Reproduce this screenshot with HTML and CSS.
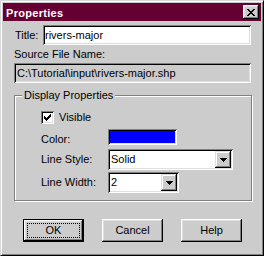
FILE: index.html
```html
<!DOCTYPE html>
<html>
<head>
<meta charset="utf-8">
<title>Properties</title>
<link rel="stylesheet" href="styles.css">
</head>
<body>
<div class="window">
  <div class="titlebar">
    <span class="title">Properties</span>
    <span class="close-btn"><svg class="px" width="8" height="7" viewBox="0 0 8 7"><path d="M0 0h2v1h-2zM6 0h2v1h-2zM1 1h2v1h-2zM5 1h2v1h-2zM2 2h4v1h-4zM3 3h2v1h-2zM2 4h4v1h-4zM1 5h2v1h-2zM5 5h2v1h-2zM0 6h2v1h-2zM6 6h2v1h-2z" fill="#000"/></svg></span>
  </div>
  <div class="content">
    <div class="title-row">
      <span class="lbl title-lbl">Title:</span>
      <div class="field input">rivers-major</div>
    </div>
    <div class="lbl src-lbl">Source File Name:</div>
    <div class="field path">C:\Tutorial\input\rivers-major.shp</div>
    <div class="group">
      <span class="legend">Display Properties</span>
      <div class="check-row">
        <span class="checkbox"><svg class="px" width="7" height="7" viewBox="0 0 7 7"><path d="M6 0h1v1h-1zM5 1h2v1h-2zM0 2h1v1h-1zM4 2h3v1h-3zM0 3h2v1h-2zM3 3h3v1h-3zM0 4h5v1h-5zM1 5h3v1h-3zM2 6h1v1h-1z" fill="#000"/></svg></span>
        <span class="lbl">Visible</span>
      </div>
      <div class="prop-row color-row">
        <span class="lbl prop-lbl color-lbl">Color:</span>
        <span class="swatch"></span>
      </div>
      <div class="prop-row style-row">
        <span class="lbl prop-lbl">Line Style:</span>
        <div class="combo combo-style">
          <span class="combo-text">Solid</span>
          <span class="drop"><svg class="px" width="7" height="4" viewBox="0 0 7 4"><path d="M0 0h7v1h-7zM1 1h5v1h-5zM2 2h3v1h-3zM3 3h1v1h-1z" fill="#000"/></svg></span>
        </div>
      </div>
      <div class="prop-row width-row">
        <span class="lbl prop-lbl">Line Width:</span>
        <div class="combo combo-width">
          <span class="combo-text">2</span>
          <span class="drop"><svg class="px" width="7" height="4" viewBox="0 0 7 4"><path d="M0 0h7v1h-7zM1 1h5v1h-5zM2 2h3v1h-3zM3 3h1v1h-1z" fill="#000"/></svg></span>
        </div>
      </div>
    </div>
    <div class="buttons">
      <div class="btn btn-default"><span class="focus">OK</span></div>
      <div class="btn">Cancel</div>
      <div class="btn">Help</div>
    </div>
  </div>
</div>
</body>
</html>
```
FILE: styles.css
```css
html, body {
  margin: 0;
  padding: 0;
  background: #cccccc;
}
body {
  font-family: "Liberation Sans", Arial, sans-serif;
  font-size: 11px;
  line-height: 13px;
  color: #000;
}
.px {
  display: block;
  shape-rendering: crispEdges;
}
.window {
  width: 264px;
  height: 256px;
  box-sizing: border-box;
  border: 1px solid;
  border-color: #d8d8d8 #000 #000 #d8d8d8;
  box-shadow: inset 1px 1px #fff, inset -1px -1px #808080;
  padding: 2px;
  background: #cccccc;
  display: flex;
  flex-direction: column;
}
.titlebar {
  height: 18px;
  background: #660033;
  color: #fff;
  display: flex;
  align-items: center;
  justify-content: space-between;
  padding-left: 3px;
}
.title {
  font-weight: bold;
  letter-spacing: 0.3px;
  padding-top: 2px;
}
.close-btn {
  width: 16px;
  height: 14px;
  margin-right: 2px;
  background: #cccccc;
  box-shadow: inset -1px -1px #000, inset 1px 1px #fff, inset -2px -2px #808080, inset 2px 2px #dfdfdf;
  display: flex;
  align-items: center;
  justify-content: center;
}
.close-btn .px {
  margin: 0 0 0 0;
}
.content {
  padding: 0 10px 0 11px;
  display: flex;
  flex-direction: column;
}
.field {
  box-shadow: inset 1px 1px #808080, inset -1px -1px #fff, inset 2px 2px #000, inset -2px -2px #dfdfdf;
  height: 20px;
  box-sizing: border-box;
  display: flex;
  align-items: center;
  padding: 1px 3px 0 3px;
  white-space: nowrap;
  overflow: hidden;
}
.title-row {
  display: flex;
  align-items: center;
  margin-top: 4px;
  padding-left: 1px;
}
.title-lbl {
  width: 28px;
}
.input {
  flex: 1;
  background: #fff;
  padding-left: 2px;
}
.src-lbl {
  margin-top: 3px;
}
.path {
  margin-top: 2px;
  background: #cccccc;
}
.group {
  position: relative;
  margin-top: 12px;
  width: 236px;
  border: 1px solid #808080;
  box-shadow: inset 1px 1px #fff, 1px 1px #fff;
  padding: 15px 0 7px 0;
}
.legend {
  position: absolute;
  top: -7px;
  left: 7px;
  padding: 0 2px;
  background: #cccccc;
}
.check-row {
  display: flex;
  align-items: center;
  padding-left: 26px;
  height: 13px;
}
.checkbox {
  width: 13px;
  height: 13px;
  box-sizing: border-box;
  background: #fff;
  box-shadow: inset 1px 1px #808080, inset -1px -1px #fff, inset 2px 2px #000, inset -2px -2px #dfdfdf;
  display: flex;
  align-items: center;
  justify-content: center;
  margin-right: 5px;
}
.prop-row {
  display: flex;
  align-items: center;
  padding-left: 26px;
}
.prop-lbl {
  width: 67px;
}
.color-row {
  margin-top: 5px;
  height: 16px;
  align-items: flex-start;
}
.color-lbl {
  margin-top: 4px;
}
.swatch {
  width: 69px;
  height: 16px;
  box-sizing: border-box;
  background: #0000ff;
  box-shadow: inset 1px 1px #808080, inset -1px -1px #fff, inset 2px 2px #000, inset -2px -2px #dfdfdf;
}
.style-row {
  margin-top: 4px;
}
.width-row {
  margin-top: 2px;
}
.combo {
  height: 21px;
  box-sizing: border-box;
  background: #fff;
  box-shadow: inset 1px 1px #808080, inset -1px -1px #fff, inset 2px 2px #000, inset -2px -2px #dfdfdf;
  padding: 2px;
  display: flex;
  align-items: stretch;
}
.combo-style {
  width: 125px;
}
.combo-width {
  width: 71px;
}
.combo-text {
  flex: 1;
  display: flex;
  align-items: center;
  padding-left: 1px;
}
.drop {
  width: 16px;
  background: #cccccc;
  box-shadow: inset -1px -1px #000, inset 1px 1px #dfdfdf, inset -2px -2px #808080, inset 2px 2px #fff;
  display: flex;
  align-items: center;
  justify-content: center;
}
.buttons {
  display: flex;
  gap: 18px;
  margin-top: 18px;
  padding-left: 9px;
}
.btn {
  width: 61px;
  height: 23px;
  box-sizing: border-box;
  box-shadow: inset -1px -1px #000, inset 1px 1px #fff, inset -2px -2px #808080, inset 2px 2px #dfdfdf;
  display: flex;
  align-items: center;
  justify-content: center;
  padding-bottom: 1px;
}
.btn-default {
  border: 1px solid #000;
  box-shadow: inset -1px -1px #000, inset 1px 1px #fff, inset -2px -2px #808080, inset 2px 2px #dfdfdf;
  padding: 3px;
}
.focus {
  flex: 1;
  align-self: stretch;
  border: 1px dotted #000;
  display: flex;
  align-items: center;
  justify-content: center;
}
```
